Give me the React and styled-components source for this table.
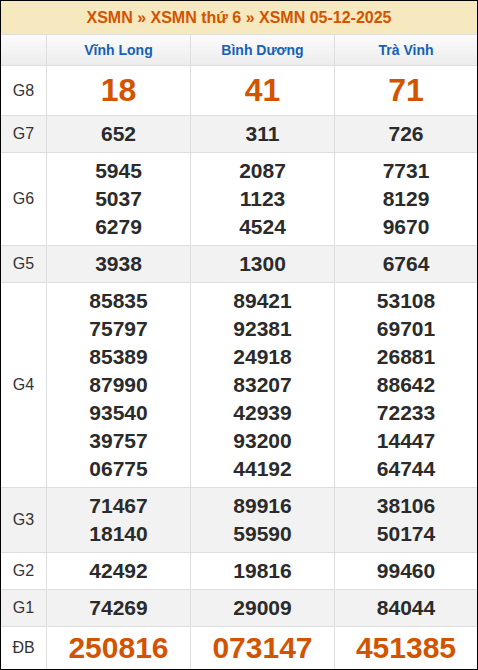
import React from "react";
import styled, { createGlobalStyle } from "styled-components";

const Global = createGlobalStyle`
  html, body { margin: 0; padding: 0; background: #fff; }
  body { font-family: "Liberation Sans", Arial, sans-serif; }
`;

const Frame = styled.div`
  width: 478px;
  height: 670px;
  box-sizing: border-box;
  border: 1px solid #000;
  overflow: hidden;
`;

const Grid = styled.div`
  display: grid;
  grid-template-columns: 45px 143px 143px 142px;
  gap: 1px;
  background: #dedede;
`;

const Title = styled.div`
  grid-column: 1 / -1;
  height: 33px;
  background: #f6e8bf;
  color: #d35400;
  font-weight: bold;
  font-size: 16px;
  display: flex;
  align-items: center;
  justify-content: center;
`;

const HeadCell = styled.div`
  height: 30px;
  background: linear-gradient(#fbfbfb, #ececec);
  color: #1560b8;
  font-weight: bold;
  font-size: 14px;
  display: flex;
  align-items: center;
  justify-content: center;
`;

const Label = styled.div`
  background: ${(p) => (p.$shade ? "#f2f2f2" : "#fff")};
  color: #333;
  font-size: 16px;
  display: flex;
  align-items: center;
  justify-content: center;
`;

const Cell = styled.div`
  background: ${(p) => (p.$shade ? "#f2f2f2" : "#fff")};
  padding: 4px 0;
  display: flex;
  flex-direction: column;
  align-items: center;
  justify-content: center;
  box-sizing: border-box;
`;

const Num = styled.div`
  font-weight: bold;
  font-size: ${(p) => p.$size}px;
  line-height: ${(p) => p.$lh}px;
  color: ${(p) => (p.$hot ? "#d35400" : "#2b2b2b")};
`;

const provinces = ["Vĩnh Long", "Bình Dương", "Trà Vinh"];

const rows = [
  { label: "G8", hot: true, size: 32, lh: 41, data: [["18"], ["41"], ["71"]] },
  { label: "G7", data: [["652"], ["311"], ["726"]] },
  {
    label: "G6",
    data: [
      ["5945", "5037", "6279"],
      ["2087", "1123", "4524"],
      ["7731", "8129", "9670"],
    ],
  },
  { label: "G5", data: [["3938"], ["1300"], ["6764"]] },
  {
    label: "G4",
    data: [
      ["85835", "75797", "85389", "87990", "93540", "39757", "06775"],
      ["89421", "92381", "24918", "83207", "42939", "93200", "44192"],
      ["53108", "69701", "26881", "88642", "72233", "14447", "64744"],
    ],
  },
  {
    label: "G3",
    data: [
      ["71467", "18140"],
      ["89916", "59590"],
      ["38106", "50174"],
    ],
  },
  { label: "G2", data: [["42492"], ["19816"], ["99460"]] },
  { label: "G1", data: [["74269"], ["29009"], ["84044"]] },
  { label: "ĐB", hot: true, size: 30, lh: 34, data: [["250816"], ["073147"], ["451385"]] },
];

export default function App() {
  return (
    <>
      <Global />
      <Frame>
        <Grid>
          <Title>XSMN » XSMN thứ 6 » XSMN 05-12-2025</Title>
          <HeadCell />
          {provinces.map((p) => (
            <HeadCell key={p}>{p}</HeadCell>
          ))}
          {rows.map((r, i) => {
            const shade = i % 2 === 1;
            return (
              <React.Fragment key={r.label}>
                <Label $shade={shade}>{r.label}</Label>
                {r.data.map((col, j) => (
                  <Cell key={j} $shade={shade}>
                    {col.map((n) => (
                      <Num key={n} $hot={r.hot} $size={r.size || 21} $lh={r.lh || 28}>
                        {n}
                      </Num>
                    ))}
                  </Cell>
                ))}
              </React.Fragment>
            );
          })}
        </Grid>
      </Frame>
    </>
  );
}
